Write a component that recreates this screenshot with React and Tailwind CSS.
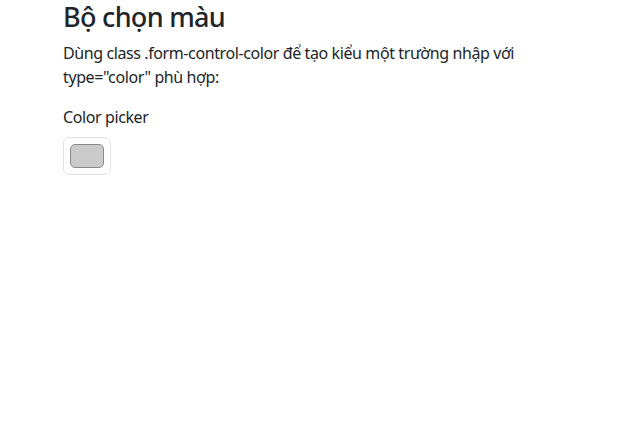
function App() {
  return (
    <div
      className="min-h-[434px] bg-white pt-px text-[#212529]"
      style={{ fontFamily: '"Noto Sans", "Open Sans", sans-serif' }}
    >
      <div className="mx-auto w-[540px] px-[18px]">
        <h2 className="mb-2 text-[27px] font-medium leading-[1.2] tracking-[-0.7px]">Bộ chọn màu</h2>
        <p className="mb-4 text-[16px] leading-6 tracking-[-0.4px]">
          Dùng class .form-control-color để tạo kiểu một trường nhập với type="color" phù hợp:
        </p>
        <label className="mb-2 block text-[16px] leading-6 tracking-[-0.4px]">Color picker</label>
        <div className="flex h-[38px] w-[48px] items-center justify-center rounded-[6px] border border-[#dee2e6] bg-white p-[6px]">
          <div className="h-full w-full rounded-[5px] border border-[#8a8a8a] bg-[#cbcbcb]" />
        </div>
      </div>
    </div>
  );
}

export default App;
